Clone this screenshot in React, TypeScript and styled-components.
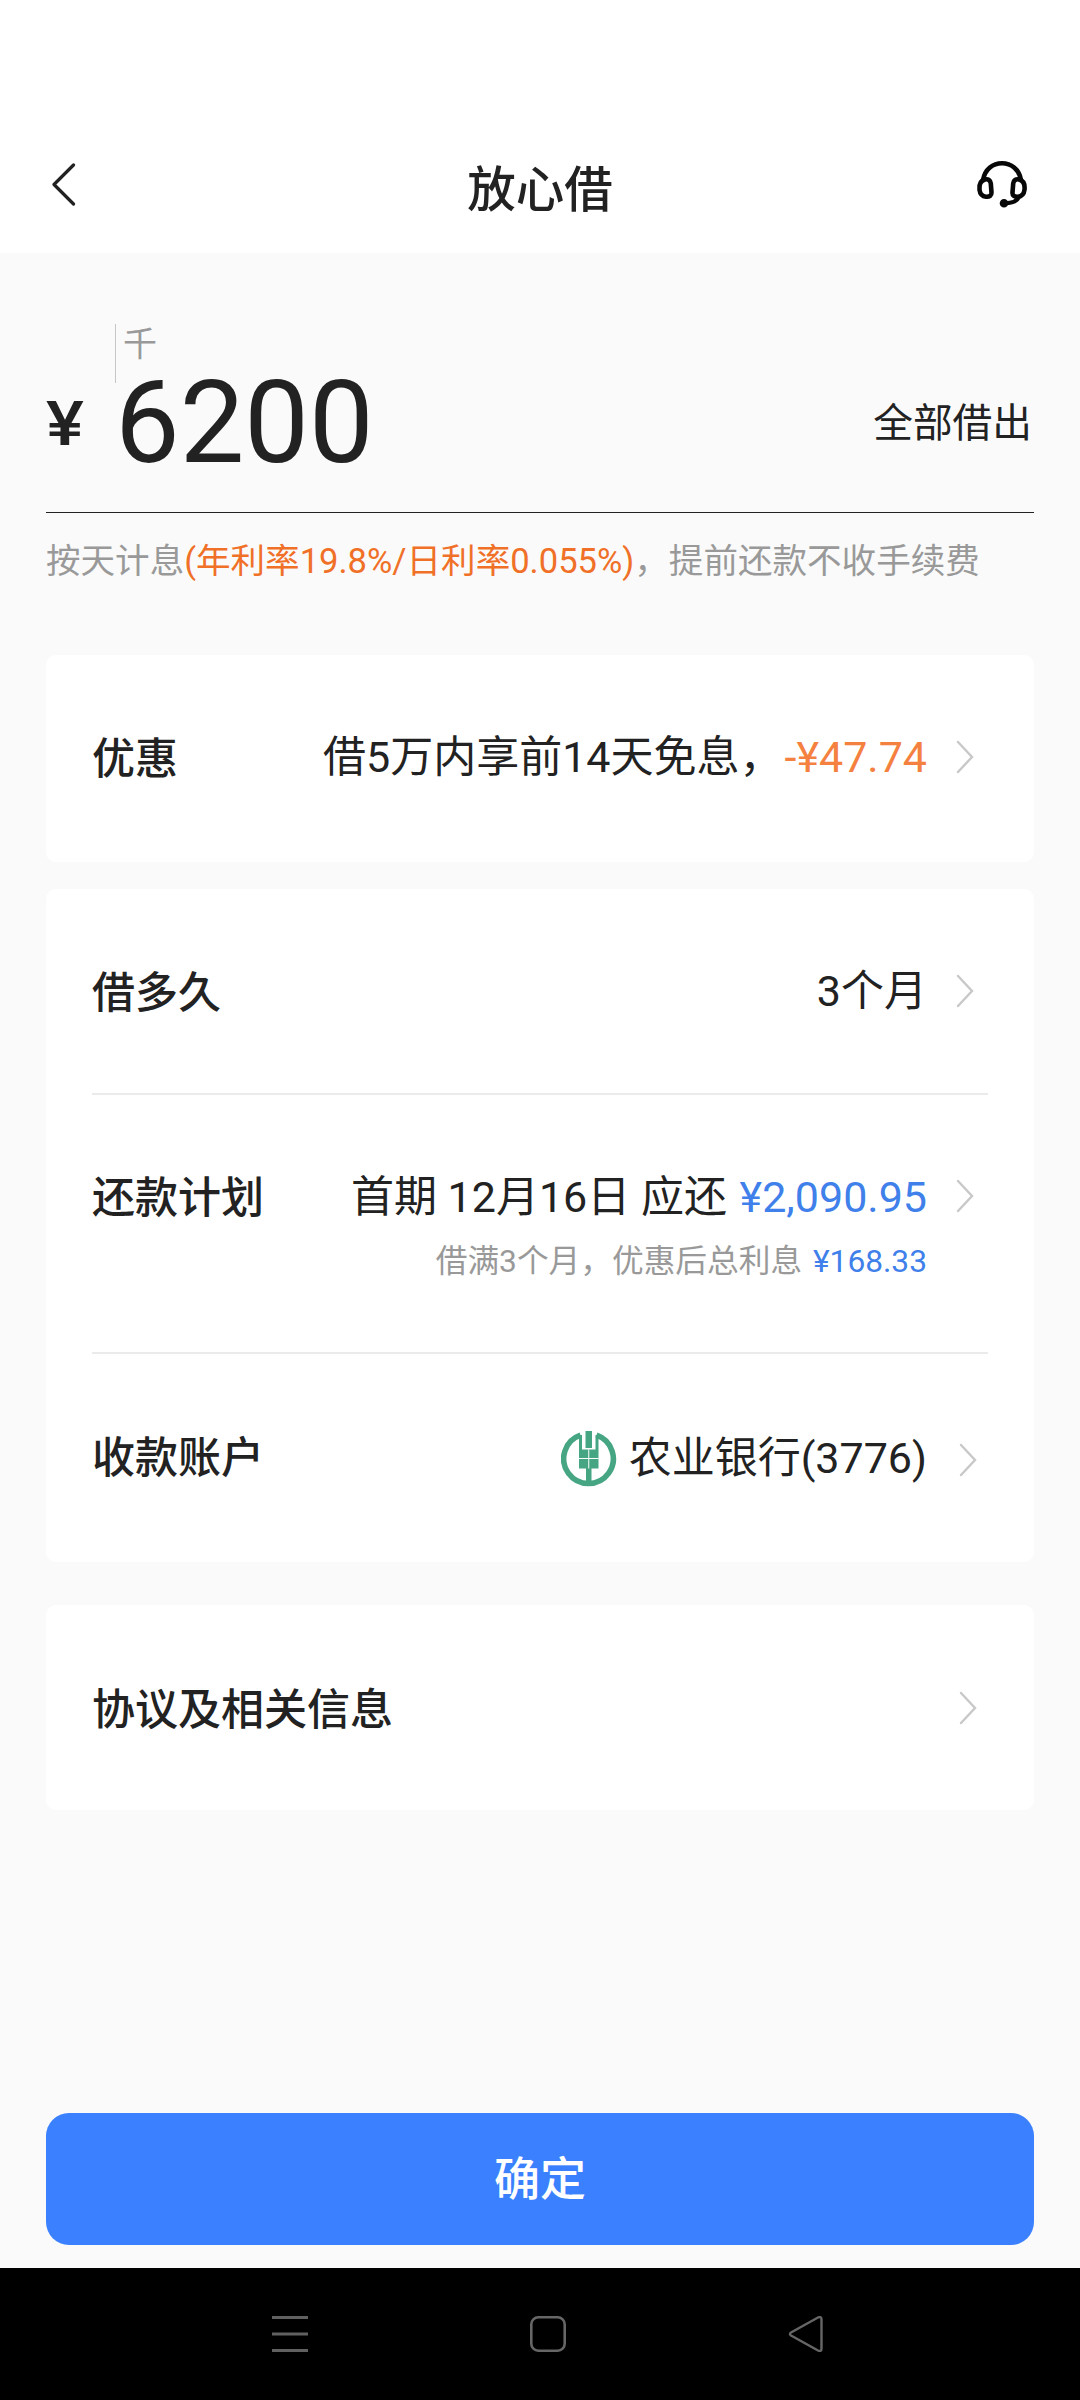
import React from "react";
import styled, { createGlobalStyle } from "styled-components";

const GlobalStyle = createGlobalStyle`
  *, *::before, *::after { box-sizing: border-box; }
  body {
    margin: 0;
    background: #fafafa;
    color: #222;
    font-family: Roboto, "Noto Sans CJK SC", sans-serif;
  }
`;

const Screen = styled.div`
  display: flex;
  flex-direction: column;
  width: 1080px;
  height: 2400px;
  overflow: hidden;
  background: #fafafa;
`;

const Header = styled.header`
  display: grid;
  grid-template-columns: 1fr auto 1fr;
  align-items: start;
  height: 253px;
  padding: 160px 52px 0;
  background: #fff;
`;

const Title = styled.h1`
  margin: 0;
  padding-top: 1px;
  font-size: 48.5px;
  font-weight: 500;
  line-height: 60px;
`;

const SupportButton = styled.span`
  justify-self: end;
  display: flex;
`;

const BackButton = styled.span`
  display: flex;
  padding-top: 2px;
`;

const Content = styled.main`
  flex: 1;
  display: flex;
  flex-direction: column;
  padding: 70px 46px 23px;
`;

const AmountRow = styled.section`
  display: flex;
  align-items: flex-start;
  height: 190px;
  border-bottom: 1px solid #222;
`;

const Currency = styled.span`
  width: 69px;
  padding-top: 71px;
  font-size: 61px;
  font-weight: 500;
  line-height: 60px;
  transform: scaleX(1.17);
  transform-origin: left center;
`;

const AmountColumn = styled.div`
  display: flex;
  flex-direction: column;
  flex: 1;
`;

const UnitMark = styled.span`
  height: 59px;
  margin-top: 1px;
  padding-left: 7px;
  border-left: 1px solid #c6c6c6;
  color: #999;
  font-size: 34px;
  line-height: 40px;
`;

const Amount = styled.span`
  margin-top: -10px;
  font-size: 115px;
  line-height: 100px;
`;

const BorrowAll = styled.span`
  padding: 71px 2px 0 0;
  font-size: 39.7px;
  line-height: 60px;
`;

const RateNote = styled.p`
  margin: 22px 0 0;
  color: #999;
  font-size: 34.55px;
  line-height: 52px;
  white-space: nowrap;
`;

const Rate = styled.span`
  color: #f07028;
`;

const Card = styled.section<{ $height: number; $gap: number }>`
  display: flex;
  flex-direction: column;
  height: ${(p) => p.$height}px;
  margin-top: ${(p) => p.$gap}px;
  padding: 0 46px;
  border-radius: 10px;
  background: #fff;
`;

const Row = styled.div<{ $height: number; $top: number }>`
  display: flex;
  align-items: flex-start;
  height: ${(p) => p.$height}px;
  padding: ${(p) => p.$top}px 14px 0 0;
  font-size: 43px;
  line-height: 60px;
  white-space: nowrap;
  & + & {
    border-top: 2px solid #ebebeb;
  }
`;

const Label = styled.span<{ $drop?: number }>`
  flex: 1;
  padding-top: ${(p) => p.$drop ?? 0}px;
  font-weight: 500;
`;

const Value = styled.div<{ $drop?: number }>`
  display: flex;
  flex-direction: column;
  align-items: flex-end;
  padding-top: ${(p) => p.$drop ?? 0}px;
`;

const BankValue = styled.div`
  display: flex;
  align-items: center;
  gap: 12px;
`;

const Detail = styled.div`
  margin-top: 10px;
  color: #999;
  font-size: 31.7px;
  line-height: 50px;
`;

const Money = styled.span<{ $tone: "discount" | "due"; $gap?: number }>`
  margin-left: ${(p) => p.$gap ?? 0}px;
  color: ${(p) => (p.$tone === "discount" ? "#f4813f" : "#4080ea")};
`;

const Arrow = styled.span<{ $inset: number; $drop: number }>`
  display: flex;
  align-items: center;
  height: 60px;
  margin-top: ${(p) => p.$drop}px;
  margin-left: ${(p) => 29 + p.$inset}px;
  margin-right: ${(p) => -p.$inset}px;
`;

const Confirm = styled.button`
  margin-top: auto;
  height: 132px;
  padding: 0;
  border: 0;
  border-radius: 23px;
  background: #3a80ff;
  color: #fff;
  font-family: inherit;
  font-size: 46px;
  font-weight: 500;
  line-height: 60px;
`;

const SystemBar = styled.nav`
  display: grid;
  grid-template-columns: 36px 36px 36px;
  justify-content: center;
  align-items: center;
  gap: 222px;
  height: 132px;
  padding-left: 16px;
  background: #000;
`;

const Chevron = ({ inset = 0, drop = 0 }: { inset?: number; drop?: number }) => (
  <Arrow $inset={inset} $drop={drop}>
    <svg width="18" height="34" viewBox="0 0 18 34" fill="none" stroke="#c8c8c8" strokeWidth="2.4" strokeLinecap="round">
      <path d="M2 2 16 17 2 32" />
    </svg>
  </Arrow>
);

const HeadsetIcon = () => (
  <svg width="52" height="50" viewBox="0 0 52 50" fill="none" stroke="#080808" strokeWidth="4.6" strokeLinecap="round" strokeLinejoin="round">
    <path d="M7 20C9 9 17 3.300 26 3.300s17 5.700 19 16.700" />
    <path d="M9 19.500c3-.8 5.500.8 5.800 4l.7 9c.2 3-2 4.500-5.500 4.200-4-.4-6-3-6.500-7-.5-4.800.5-9 5.500-10.200Z" />
    <path d="M43 19.500c-3-.8-5.500.8-5.800 4l-.7 9c-.2 3 2 4.500 5.500 4.200 4-.4 6-3 6.500-7 .5-4.800-.5-9-5.500-10.200Z" />
    <path d="M43 37c-2 4-6 6.300-14 6.300" strokeWidth="4" />
    <circle cx="28" cy="43.300" r="2" fill="#080808" />
  </svg>
);

const BankLogo = () => (
  <svg width="56" height="58" viewBox="0 -2 56 58">
    <path d="M19.500 4.200A24.800 24.800 0 1 0 35.500 4.200" fill="none" stroke="#46a583" strokeWidth="5.600" />
    <path d="M24.500 0h6.500v17h-6.500zM18 4h3v14.500h13.500V4h3v33.500h-7V55h-5.500V37.500h-7z" fill="#46a583" />
    <path d="M18 27.500h19.500M27.750 18.500v19" stroke="#fff" strokeWidth="1" />
  </svg>
);

export default function App() {
  return (
    <>
      <GlobalStyle />
      <Screen>
        <Header>
          <BackButton>
            <svg width="25" height="46" viewBox="0 0 25 46" fill="none" stroke="#222" strokeWidth="3.200" strokeLinecap="round" strokeLinejoin="round">
              <path d="M21.500 3 2 22.500 21.500 42" />
            </svg>
          </BackButton>
          <Title>放心借</Title>
          <SupportButton>
            <HeadsetIcon />
          </SupportButton>
        </Header>

        <Content>
          <AmountRow>
            <Currency>¥</Currency>
            <AmountColumn>
              <UnitMark>千</UnitMark>
              <Amount>6200</Amount>
            </AmountColumn>
            <BorrowAll>全部借出</BorrowAll>
          </AmountRow>
          <RateNote>
            按天计息<Rate>(年利率19.8%/日利率0.055%)</Rate>，提前还款不收手续费
          </RateNote>

          <Card $height={207} $gap={68}>
            <Row $height={207} $top={72}>
              <Label $drop={2}>优惠</Label>
              <Value>
                <div>
                  借5万内享前14天免息，<Money $tone="discount" $gap={2}>-¥47.74</Money>
                </div>
              </Value>
              <Chevron />
            </Row>
          </Card>

          <Card $height={673} $gap={27}>
            <Row $height={204} $top={72}>
              <Label $drop={2}>借多久</Label>
              <Value>3个月</Value>
              <Chevron />
            </Row>
            <Row $height={259} $top={71}>
              <Label $drop={2}>还款计划</Label>
              <Value $drop={1}>
                <div>
                  首期 12月16日 应还 <Money $tone="due" $gap={2}>¥2,090.95</Money>
                </div>
                <Detail>
                  借满3个月，优惠后总利息 <Money $tone="due" $gap={3}>¥168.33</Money>
                </Detail>
              </Value>
              <Chevron />
            </Row>
            <Row $height={210} $top={74}>
              <Label>收款账户</Label>
              <BankValue>
                <BankLogo />
                <span>农业银行(3776)</span>
              </BankValue>
              <Chevron inset={3} drop={2} />
            </Row>
          </Card>

          <Card $height={205} $gap={43}>
            <Row $height={205} $top={73}>
              <Label $drop={2}>协议及相关信息</Label>
              <Chevron inset={3} />
            </Row>
          </Card>

          <Confirm>确定</Confirm>
        </Content>

        <SystemBar>
          <svg width="36" height="38" viewBox="0 0 36 38" stroke="#606060" strokeWidth="3">
            <path d="M0 2.500h36M0 19h36M0 35.500h36" />
          </svg>
          <svg width="36" height="36" viewBox="0 0 36 36" fill="none" stroke="#666" strokeWidth="2.600">
            <rect x="1.300" y="1.300" width="33.400" height="33.400" rx="7" />
          </svg>
          <svg width="36" height="36" viewBox="0 0 36 36" fill="none" stroke="#666" strokeWidth="2.400" strokeLinejoin="round">
            <path d="M3 16.500 30 1.500Q33.500 0 33.500 3.500V32.500Q33.500 36 30 34.500L3 19.500Q.8 18 3 16.500Z" />
          </svg>
        </SystemBar>
      </Screen>
    </>
  );
}
